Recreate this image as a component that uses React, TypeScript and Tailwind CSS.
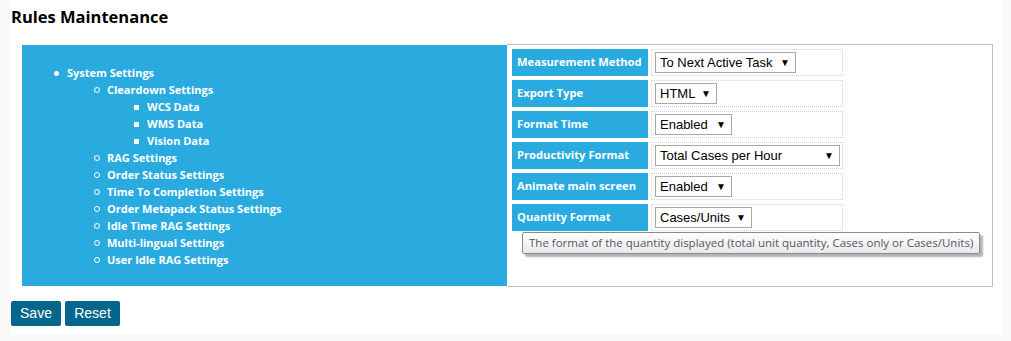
import React from 'react';

const tree = [
  { label: 'System Settings', level: 0 },
  { label: 'Cleardown Settings', level: 1 },
  { label: 'WCS Data', level: 2 },
  { label: 'WMS Data', level: 2 },
  { label: 'Vision Data', level: 2 },
  { label: 'RAG Settings', level: 1 },
  { label: 'Order Status Settings', level: 1 },
  { label: 'Time To Completion Settings', level: 1 },
  { label: 'Order Metapack Status Settings', level: 1 },
  { label: 'Idle Time RAG Settings', level: 1 },
  { label: 'Multi-lingual Settings', level: 1 },
  { label: 'User Idle RAG Settings', level: 1 },
];

const settings = [
  { label: 'Measurement Method', value: 'To Next Active Task', width: 'w-[141px]' },
  { label: 'Export Type', value: 'HTML', width: 'w-[62px]' },
  { label: 'Format Time', value: 'Enabled', width: 'w-[77px]' },
  { label: 'Productivity Format', value: 'Total Cases per Hour', width: 'w-[185px]' },
  { label: 'Animate main screen', value: 'Enabled', width: 'w-[77px]' },
  { label: 'Quantity Format', value: 'Cases/Units', width: 'w-[97px]' },
];

const Bullet = ({ level }: { level: number }) => {
  if (level === 0) return <span className="h-[5px] w-[5px] rounded-full bg-white" />;
  if (level === 1) return <span className="h-[6px] w-[6px] rounded-full border border-white" />;
  return <span className="h-[5px] w-[5px] bg-white" />;
};

const indent = ['pl-[32px]', 'pl-[72px]', 'pl-[112px]'];

const RulesMaintenance = () => {
  return (
    <div className="min-h-screen bg-[#f9f9f9] font-['Open_Sans',sans-serif]">
      <div className="ml-[11px] h-[335px] w-[992px] bg-white">
        <h1 className="pt-[5px] text-[16.5px] font-bold leading-[23px] text-black">Rules Maintenance</h1>

        <div className="mt-[16px] ml-[11px] flex w-[971px]">
          <div className="mt-px flex h-[241px] w-[485px] items-center bg-[#2aabdf]">
            <ul className="w-full pt-[2px]">
              {tree.map((item) => (
                <li
                  key={item.label}
                  className={`flex h-[17px] items-center text-[11px] font-bold text-white ${indent[item.level]}`}
                >
                  <span className="flex w-[13px] items-center">
                    <Bullet level={item.level} />
                  </span>
                  {item.label}
                </li>
              ))}
            </ul>
          </div>

          <div className="relative h-[243px] flex-1 border border-l-0 border-[#c0c0c0] pt-[4px] pl-[5px]">
            <div className="flex flex-col gap-[4px]">
              {settings.map((s) => (
                <div key={s.label} className="flex h-[27px]">
                  <div className="flex w-[136px] items-center bg-[#2aabdf] pl-[5px] text-[11.2px] font-bold text-white">
                    {s.label}
                  </div>
                  <div className="ml-[3px] flex w-[192px] items-center border border-dotted border-[#ccccff] pl-[3px]">
                    <div
                      className={`flex h-[21px] items-center justify-between border border-[#a9a9a9] bg-white pr-[5px] pl-[4px] font-['Liberation_Sans',Arial,sans-serif] text-[13px] text-black ${s.width}`}
                    >
                      <span>{s.value}</span>
                      <span className="text-[10px]">▼</span>
                    </div>
                  </div>
                </div>
              ))}
            </div>

            <div className="absolute top-[187px] left-[15px] rounded-[2px] border border-[#8a8a8a] bg-gradient-to-b from-white to-[#e8e8ee] px-[6px] text-[11.5px] leading-[20px] whitespace-nowrap text-[#575757] shadow-[3px_3px_2px_rgba(0,0,0,0.3)]">
              The format of the quantity displayed (total unit quantity, Cases only or Cases/Units)
            </div>
          </div>
        </div>

        <div className="mt-[14px] flex gap-[4px] font-['Liberation_Sans',Arial,sans-serif] text-[14px] text-white">
          <button className="h-[25px] w-[50px] rounded-[2px] bg-[#03668d]">Save</button>
          <button className="h-[25px] w-[55px] rounded-[2px] bg-[#03668d]">Reset</button>
        </div>
      </div>
    </div>
  );
};

export default RulesMaintenance;
